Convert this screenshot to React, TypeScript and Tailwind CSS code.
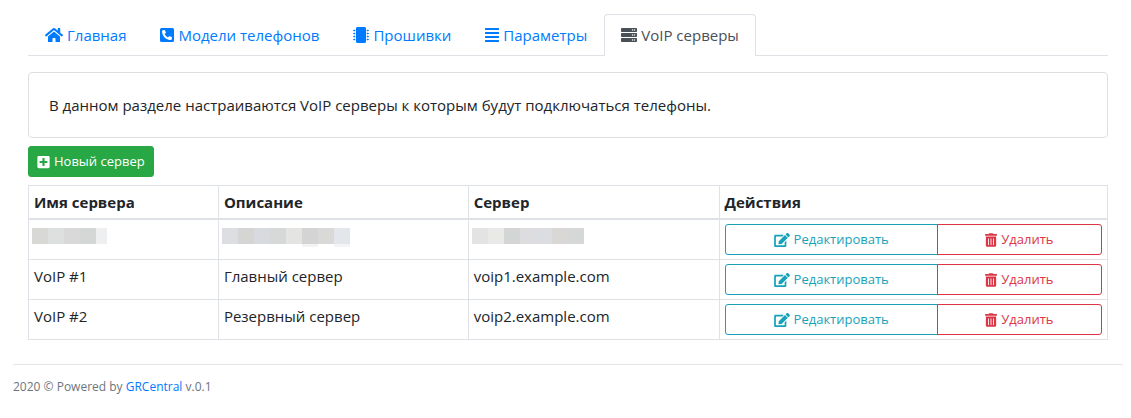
import type { ReactNode } from "react";
import {
  FaAlignJustify,
  FaEdit,
  FaHome,
  FaMicrochip,
  FaPhoneSquareAlt,
  FaPlusSquare,
  FaServer,
  FaTrashAlt,
} from "react-icons/fa";

const tabs: { label: string; icon: ReactNode; active?: boolean }[] = [
  { label: "Главная", icon: <FaHome className="h-4 w-[18px]" /> },
  { label: "Модели телефонов", icon: <FaPhoneSquareAlt className="h-4 w-[14px]" /> },
  { label: "Прошивки", icon: <FaMicrochip className="size-4" /> },
  { label: "Параметры", icon: <FaAlignJustify className="h-4 w-[14px]" /> },
  { label: "VoIP серверы", icon: <FaServer className="size-4" />, active: true },
];

const columns = [
  { title: "Имя сервера", width: "w-[17.6%]" },
  { title: "Описание", width: "w-[23.15%]" },
  { title: "Сервер", width: "w-[23.25%]" },
  { title: "Действия", width: "w-[36%]" },
];

const servers = [
  { name: "VoIP #1", description: "Главный сервер", host: "voip1.example.com" },
  { name: "VoIP #2", description: "Резервный сервер", host: "voip2.example.com" },
];

const hiddenServer = [
  ["w-4 bg-[#d8d8d7]", "w-4 bg-[#dde0df]", "w-4 bg-[#d9d9da]", "w-4 bg-[#d5d7d6]", "w-[11px] bg-[#eeeff1]"],
  [
    "w-4 bg-[#dddee1]",
    "w-4 bg-[#d5d5d3]",
    "w-4 bg-[#d9dae0]",
    "w-4 bg-[#d6d9d8]",
    "w-4 bg-[#e4e4e2]",
    "w-4 bg-[#d4d4d5] border-b-3 border-[#f3f3f5] h-[19px]",
    "w-4 bg-[#d9d9d7]",
    "w-4 bg-[#e3e7ec] border-b-3 border-[#f3f4f7] h-[19px]",
  ],
  [
    "w-4 bg-[#e3e3e4]",
    "w-4 bg-[#e9e9e7]",
    "w-4 bg-[#d3d6d5]",
    "w-4 bg-[#dddddf]",
    "w-4 bg-[#dcdde0]",
    "w-4 bg-[#d9d8d6]",
    "w-4 bg-[#d5d8d7]",
  ],
];

const cell = "border border-[#dee2e6] px-[5px] py-1 align-top";

function Mosaic({ blocks }: { blocks: string[] }) {
  return (
    <div className="mt-1 -ml-0.5 flex items-start" aria-hidden="true">
      {blocks.map((block, i) => (
        <span key={i} className={block.includes("h-[19px]") ? block : `h-4 ${block}`} />
      ))}
    </div>
  );
}

function Actions() {
  return (
    <div className="flex text-[13px] leading-[21px]">
      <button
        type="button"
        className="-mr-px flex w-[56.5%] items-center justify-center gap-1 rounded-l-[3px] border border-[#17a2b8] px-2 py-1 text-[#17a2b8]"
      >
        <FaEdit className="h-[14px] w-4" />
        Редактировать
      </button>
      <button
        type="button"
        className="flex flex-1 items-center justify-center gap-1 rounded-r-[3px] border border-[#dc3545] px-2 py-1 text-[#dc3545]"
      >
        <FaTrashAlt className="h-[14px] w-3" />
        Удалить
      </button>
    </div>
  );
}

export default function App() {
  return (
    <div className="bg-white pt-[14px] pr-2 pb-5 pl-[13px] font-['Open_Sans','Noto_Sans',sans-serif] text-[15px] leading-6 text-[#212529]">
      <main className="px-[15px]">
        <nav className="flex border-b border-[#dee2e6]">
          {tabs.map((tab) => (
            <a
              key={tab.label}
              href="#"
              aria-current={tab.active ? "page" : undefined}
              className={
                tab.active
                  ? "-mb-px flex items-center gap-1 rounded-t border border-[#dee2e6] border-b-white bg-white px-4 py-2 text-[#495057]"
                  : "-mb-px flex items-center gap-1 border border-transparent px-4 py-2 text-[#007bff]"
              }
            >
              {tab.icon}
              {tab.label}
            </a>
          ))}
        </nav>

        <section className="mt-4 rounded border border-[#dfdfdf] p-5">
          <p>В данном разделе настраиваются VoIP серверы к которым будут подключаться телефоны.</p>
        </section>

        <button
          type="button"
          className="mt-2 flex items-center gap-1 rounded-[3px] border border-[#28a745] bg-[#28a745] px-2 py-1 text-[13px] leading-[21px] text-white"
        >
          <FaPlusSquare className="h-[14px] w-[13px]" />
          Новый сервер
        </button>

        <table className="mt-2 w-full table-fixed border-collapse border border-[#dee2e6]">
          <thead>
            <tr>
              {columns.map((column) => (
                <th
                  key={column.title}
                  scope="col"
                  className={`border border-b-2 border-[#dee2e6] px-[5px] py-1 text-left font-bold ${column.width}`}
                >
                  {column.title}
                </th>
              ))}
            </tr>
          </thead>
          <tbody>
            <tr>
              {hiddenServer.map((blocks, i) => (
                <td key={i} className={cell}>
                  <Mosaic blocks={blocks} />
                </td>
              ))}
              <td className={cell}>
                <Actions />
              </td>
            </tr>
            {servers.map((server) => (
              <tr key={server.name}>
                <td className={cell}>{server.name}</td>
                <td className={cell}>{server.description}</td>
                <td className={cell}>{server.host}</td>
                <td className={cell}>
                  <Actions />
                </td>
              </tr>
            ))}
          </tbody>
        </table>
      </main>

      <footer className="mt-6 border-t border-[#e5e5e5] pt-3 text-[12px] leading-5 text-[#6c757d]">
        2020 © Powered by{" "}
        <a href="#" className="text-[#007bff]">
          GRCentral
        </a>{" "}
        v.0.1
      </footer>
    </div>
  );
}
